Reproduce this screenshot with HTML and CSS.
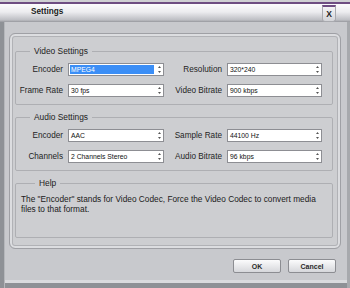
FILE: index.html
```html
<!DOCTYPE html>
<html lang="en">
<head>
    <meta charset="UTF-8">
    <title>Settings</title>
    <link rel="stylesheet" href="styles.css">
</head>
<body>
<div class="window">
    <div class="titlebar">
        <span class="title">Settings</span>
        <span class="close">X</span>
    </div>

    <div class="panel">
        <fieldset class="group">
            <legend>Video Settings</legend>
            <div class="grid">
                <label>Encoder</label>
                <div class="select selected"><span class="value">MPEG4</span><svg class="arrow" width="3" height="7" viewBox="0 0 3 7"><path d="M1.5 0L3 2H0zM0 5h3L1.5 7z" fill="#555"/></svg></div>
                <label>Resolution</label>
                <div class="select"><span class="value">320*240</span><svg class="arrow" width="3" height="7" viewBox="0 0 3 7"><path d="M1.5 0L3 2H0zM0 5h3L1.5 7z" fill="#555"/></svg></div>
                <label>Frame Rate</label>
                <div class="select"><span class="value">30 fps</span><svg class="arrow" width="3" height="7" viewBox="0 0 3 7"><path d="M1.5 0L3 2H0zM0 5h3L1.5 7z" fill="#555"/></svg></div>
                <label>Video Bitrate</label>
                <div class="select"><span class="value">900 kbps</span><svg class="arrow" width="3" height="7" viewBox="0 0 3 7"><path d="M1.5 0L3 2H0zM0 5h3L1.5 7z" fill="#555"/></svg></div>
            </div>
        </fieldset>

        <fieldset class="group">
            <legend>Audio Settings</legend>
            <div class="grid">
                <label>Encoder</label>
                <div class="select"><span class="value">AAC</span><svg class="arrow" width="3" height="7" viewBox="0 0 3 7"><path d="M1.5 0L3 2H0zM0 5h3L1.5 7z" fill="#555"/></svg></div>
                <label>Sample Rate</label>
                <div class="select"><span class="value">44100 Hz</span><svg class="arrow" width="3" height="7" viewBox="0 0 3 7"><path d="M1.5 0L3 2H0zM0 5h3L1.5 7z" fill="#555"/></svg></div>
                <label>Channels</label>
                <div class="select"><span class="value">2 Channels Stereo</span><svg class="arrow" width="3" height="7" viewBox="0 0 3 7"><path d="M1.5 0L3 2H0zM0 5h3L1.5 7z" fill="#555"/></svg></div>
                <label>Audio Bitrate</label>
                <div class="select"><span class="value">96 kbps</span><svg class="arrow" width="3" height="7" viewBox="0 0 3 7"><path d="M1.5 0L3 2H0zM0 5h3L1.5 7z" fill="#555"/></svg></div>
            </div>
        </fieldset>

        <fieldset class="group help">
            <legend>Help</legend>
            <p>The "Encoder" stands for Video Codec, Force the Video Codec to convert media files to that format.</p>
        </fieldset>
    </div>

    <div class="buttons">
        <button>OK</button>
        <button>Cancel</button>
    </div>
</div>
</body>
</html>
```

FILE: styles.css
```css
body {
    margin: 0;
    font-family: "Liberation Sans", Arial, sans-serif;
    color: #1e1e1e;
}
.window {
    width: 350px;
    height: 288px;
    overflow: hidden;
    background-color: #c8c9cd;
    box-shadow: inset 4px 0 0 #8e9196, inset 5px 0 0 #b5b7bb,
                inset -3px 0 0 #a7a9ad,
                inset 0 -5px 0 #8e9196, inset 0 -8px 0 #dadbde;
}
.titlebar {
    height: 22px;
    display: flex;
    align-items: flex-start;
    background: linear-gradient(to bottom, #cfd0d3 0, #cfd0d3 2px, #6e4d82 2px, #6e4d82 4px,
                #fcfcfd 4px, #ececef 12px, #bdbec3 20px, #96979d 22px);
}
.title {
    padding: 7px 0 0 31px;
    font-size: 8.2px;
    font-weight: bold;
    line-height: 10px;
    color: #202020;
}
.close {
    margin-left: auto;
    margin-right: 14px;
    margin-top: 5px;
    width: 12px;
    height: 14px;
    border: 1px solid #a9aaaf;
    border-top: 2px solid #6e4d82;
    border-radius: 0 0 3px 3px;
    background: linear-gradient(#f4f4f6, #d3d4d8);
    font-size: 8.5px;
    font-weight: bold;
    line-height: 15px;
    text-align: center;
    color: #222;
}
.panel {
    box-sizing: border-box;
    width: 332px;
    height: 216px;
    margin: 11px 0 0 9px;
    padding: 12px 7px 0 5px;
    border: 1px solid #9fa0a5;
    border-radius: 6px;
    background-color: #cdced1;
    box-shadow: inset 0 0 0 2px #dcdde0, inset 0 0 0 3px #b1b2b6;
    display: flex;
    flex-direction: column;
    gap: 7px;
}
.group {
    margin: 0;
    padding: 7px 10px 7px 0;
    border: 1px solid #aeafb3;
    border-radius: 2px;
    min-width: 0;
}
.group legend {
    margin-left: 14px;
    padding: 0 4px;
    font-size: 8.4px;
    line-height: 10px;
    color: #222;
}
.grid {
    display: grid;
    grid-template-columns: 47px 96px 53px 95px;
    grid-auto-rows: 13px;
    column-gap: 5px;
    row-gap: 8px;
    align-items: center;
}
.grid label {
    font-size: 8.2px;
    text-align: right;
    white-space: nowrap;
}
.select {
    box-sizing: border-box;
    height: 13px;
    border: 1px solid #8d8e93;
    background-color: #fff;
    display: flex;
    align-items: center;
    padding: 1px 2px 1px 1px;
}
.select .value {
    flex: 1;
    height: 100%;
    padding-left: 1px;
    font-size: 6.8px;
    line-height: 9px;
    color: #111;
}
.select.selected .value {
    background-color: #3b8ef6;
    color: #fff;
    margin-right: 4px;
}
.arrow {
    flex: none;
}
.help {
    box-sizing: border-box;
    height: 60px;
    padding: 6px 6px 0 5px;
}
.help p {
    margin: 0;
    font-size: 8.3px;
    line-height: 10px;
    color: #202020;
}
.buttons {
    display: flex;
    justify-content: flex-end;
    gap: 7px;
    padding: 10px 14px 0 0;
}
.buttons button {
    width: 48px;
    height: 14px;
    padding: 0;
    border: 1px solid #8c8d92;
    border-radius: 2px;
    background: linear-gradient(#fbfbfc, #d6d7db);
    font-family: "Liberation Sans", Arial, sans-serif;
    font-size: 7px;
    font-weight: bold;
    color: #2a2a2a;
}
```
